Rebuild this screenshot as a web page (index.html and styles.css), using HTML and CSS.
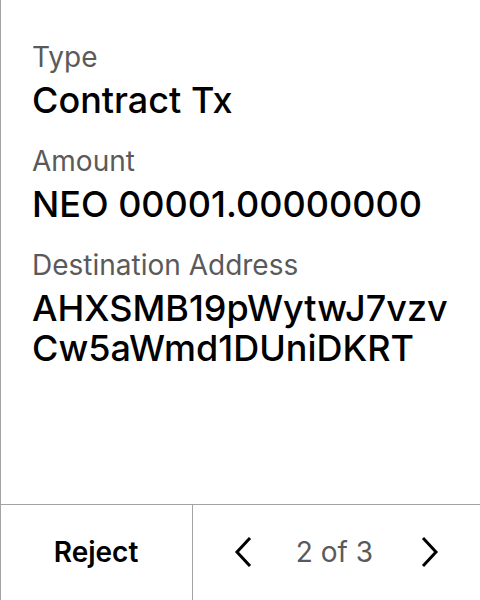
FILE: index.html
```html
<!DOCTYPE html>
<html lang="en">
<head>
<meta charset="utf-8">
<meta name="viewport" content="width=device-width, initial-scale=1">
<title>Confirm transaction</title>
<link rel="stylesheet" href="styles.css">
</head>
<body>
<main class="screen">
  <dl class="details">
    <div class="field">
      <dt class="label">Type</dt>
      <dd class="value">Contract Tx</dd>
    </div>
    <div class="field">
      <dt class="label">Amount</dt>
      <dd class="value">NEO 00001.00000000</dd>
    </div>
    <div class="field">
      <dt class="label">Destination Address</dt>
      <dd class="value">AHXSMB19pWytwJ7vzvCw5aWmd1DUniDKRT</dd>
    </div>
  </dl>
  <footer class="actions">
    <button class="reject" type="button">Reject</button>
    <nav class="pager" aria-label="Pages">
      <button class="arrow" type="button" aria-label="Previous">
        <svg class="icon" viewBox="0 0 32 32" aria-hidden="true"><path d="M27 2 14 16 27 30"/></svg>
      </button>
      <span class="count">2 of 3</span>
      <button class="arrow" type="button" aria-label="Next">
        <svg class="icon" viewBox="0 0 32 32" aria-hidden="true"><path d="M9 2 22 16 9 30"/></svg>
      </button>
    </nav>
  </footer>
</main>
</body>
</html>
```
FILE: styles.css
```css
* {
  box-sizing: border-box;
}

body {
  margin: 0;
  background: #fff;
  color: #000;
  font-family: Inter, "Liberation Sans", sans-serif;
}

.screen {
  display: flex;
  flex-direction: column;
  min-height: 100vh;
  box-shadow: inset 1px 0 #a3a3a3;
}

.details {
  flex: 1;
  display: flex;
  flex-direction: column;
  gap: 24px;
  margin: 0;
  padding: 40px 24px 40px 32px;
}

.label {
  color: #5a5a5a;
  font-size: 28px;
  line-height: 34px;
}

.value {
  margin: 6px 0 0;
  font-size: 36px;
  font-weight: 500;
  line-height: 40px;
  overflow-wrap: anywhere;
}

.actions {
  display: grid;
  grid-template-columns: 2fr 3fr;
  height: 96px;
  border-top: 1px solid #a3a3a3;
}

button {
  padding: 0;
  border: 0;
  background: none;
  color: inherit;
  font: inherit;
}

.reject {
  padding-bottom: 2px;
  font-size: 28px;
  font-weight: 600;
}

.pager {
  display: flex;
  align-items: center;
  justify-content: space-between;
  padding: 0 34px 2px 30px;
  border-left: 1px solid #a3a3a3;
}

.arrow {
  display: flex;
}

.icon {
  width: 32px;
  height: 32px;
  fill: none;
  stroke: #000;
  stroke-width: 3;
}

.count {
  color: #5a5a5a;
  font-size: 28px;
}
```
